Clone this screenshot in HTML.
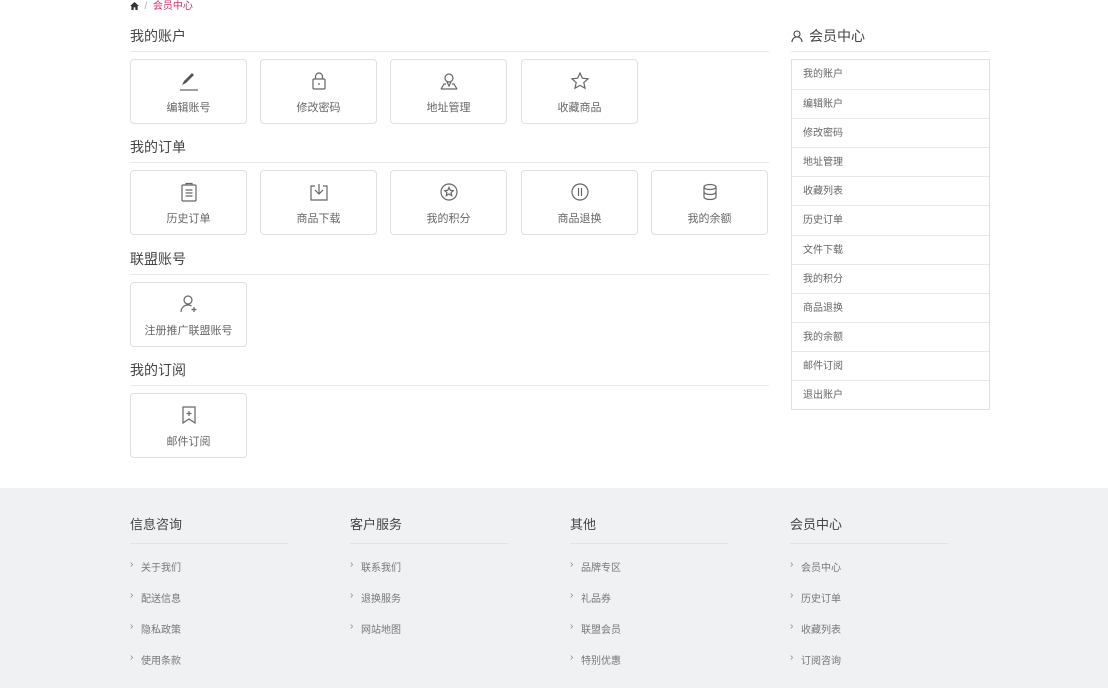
<!DOCTYPE html>
<html><head><meta charset="utf-8"><style>
*{margin:0;padding:0;box-sizing:border-box}
body{width:1108px;height:688px;background:#fff;font-family:"Liberation Sans","Noto Sans CJK SC",sans-serif;color:#333;position:relative;overflow:hidden}
.a{position:absolute}
.h{position:absolute;left:130px;width:639px;font-size:14px;color:#444;height:16px;line-height:16px}
.line{position:absolute;height:1px;background:#e8e8e8}
.card{position:absolute;width:117px;height:65px;border:1px solid #e0e0e0;border-radius:4px;text-align:center}
.card svg{position:absolute;left:48px;top:11px;width:20px;height:20px;fill:none;stroke:#666;stroke-width:1.2}
.card span{position:absolute;left:0;right:0;top:41px;font-size:11px;color:#666;line-height:14px}
.side{position:absolute;left:791px;top:59px;width:199px;border:1px solid #e0e0e0}
.side div{height:29.1px;line-height:29px;border-top:1px solid #e8e8e8;padding-left:11px;font-size:10px;color:#666}
.side div:first-child{border-top:0}
.foot{position:absolute;left:0;top:488px;width:1108px;height:200px;background:#f0f1f3}
.fc{position:absolute;top:27px;width:158px}
.fc h4{font-weight:normal;font-size:13px;color:#444;height:19px;line-height:19px}
.fc .l{height:1px;background:#e2e3e5;margin-top:9px}
.fc p{font-size:10px;color:#777;height:31px;line-height:14px;padding-left:11px;position:relative}
.fc p:first-of-type{margin-top:18px}
.fc p:before{content:"›";position:absolute;left:0;top:-4px;color:#888;font-size:10px}
</style></head><body>
<div class="a" style="left:130px;top:1px;font-size:10px;color:#aaa;line-height:12px"><svg width="9" height="8" viewBox="0 0 10 9" style="vertical-align:-1px"><path d="M5 0L0 4.5h1.5V9h2.5V6h2v3h2.5V4.5H10z" fill="#333"/></svg> &nbsp;/ &nbsp;<span style="color:#d0306a">会员中心</span></div>

<div class="h" style="top:28px">我的账户</div><div class="line" style="left:130px;top:51px;width:639px"></div>
<div class="card" style="left:130px;top:59px"><svg viewBox="0 0 20 20"><path d="M3 14l2-4 8-8 2 2-8 8-4 2z" fill="#555" stroke="none"/><path d="M1 19h18"/></svg><span>编辑账号</span></div>
<div class="card" style="left:260px;top:59px"><svg viewBox="0 0 20 20"><rect x="4" y="8" width="12" height="10" rx="1"/><path d="M6.5 8V5.5a3.5 3.5 0 0 1 7 0V8M10 12v2"/></svg><span>修改密码</span></div>
<div class="card" style="left:390px;top:59px"><svg viewBox="0 0 20 20"><circle cx="10" cy="7" r="4"/><path d="M8 11l2 4 2-4M2 18l3-5h2M18 18l-3-5h-2M2 18h16"/></svg><span>地址管理</span></div>
<div class="card" style="left:521px;top:59px"><svg viewBox="0 0 20 20"><path d="M10 2l2.4 5.2 5.6.6-4.2 3.8 1.2 5.6L10 14.4 5 17.2l1.2-5.6L2 7.8l5.6-.6z"/></svg><span>收藏商品</span></div>

<div class="h" style="top:139px">我的订单</div><div class="line" style="left:130px;top:162px;width:639px"></div>
<div class="card" style="left:130px;top:170px"><svg viewBox="0 0 20 20"><rect x="3" y="3" width="14" height="16" rx="1"/><path d="M7 3V1.5h6V3M6.5 8h7M6.5 11h7M6.5 14h7"/></svg><span>历史订单</span></div>
<div class="card" style="left:260px;top:170px"><svg viewBox="0 0 20 20"><path d="M6 4H2v14h16V4h-4M10 2v10M6 8l4 4 4-4"/></svg><span>商品下载</span></div>
<div class="card" style="left:390px;top:170px"><svg viewBox="0 0 20 20"><circle cx="10" cy="10" r="8"/><path d="M10 5.5l1.3 2.8 3 .3-2.2 2 .6 3L10 12l-2.7 1.6.6-3-2.2-2 3-.3z"/></svg><span>我的积分</span></div>
<div class="card" style="left:521px;top:170px"><svg viewBox="0 0 20 20"><circle cx="10" cy="10" r="8"/><path d="M8.5 6v8M11.5 6v8"/></svg><span>商品退换</span></div>
<div class="card" style="left:651px;top:170px"><svg viewBox="0 0 20 20"><ellipse cx="10" cy="5" rx="6" ry="2.5"/><path d="M4 5v10c0 1.4 2.7 2.5 6 2.5s6-1.1 6-2.5V5M4 10c0 1.4 2.7 2.5 6 2.5s6-1.1 6-2.5"/></svg><span>我的余额</span></div>

<div class="h" style="top:251px">联盟账号</div><div class="line" style="left:130px;top:274px;width:639px"></div>
<div class="card" style="left:130px;top:282px"><svg viewBox="0 0 20 20"><circle cx="9" cy="6" r="4"/><path d="M2 18c0-4 3-7 7-7 1.5 0 2.5.3 3.5 1M15 13v5M12.5 15.5h5"/></svg><span>注册推广联盟账号</span></div>

<div class="h" style="top:362px">我的订阅</div><div class="line" style="left:130px;top:385px;width:639px"></div>
<div class="card" style="left:130px;top:393px"><svg viewBox="0 0 20 20"><path d="M4 2h12v16l-6-4-6 4zM10 6v5M7.5 8.5h5"/></svg><span>邮件订阅</span></div>

<div class="a" style="left:791px;top:28px;font-size:14px;line-height:16px;color:#444"><svg width="12" height="12" viewBox="0 0 12 12" style="vertical-align:-1px;margin-right:6px"><circle cx="6" cy="4" r="3" fill="none" stroke="#444" stroke-width="1.1"/><path d="M1 12c0-3 2-5 5-5s5 2 5 5" fill="none" stroke="#444" stroke-width="1.1"/></svg>会员中心</div>
<div class="line" style="left:791px;top:51px;width:199px"></div>
<div class="side"><div>我的账户</div><div>编辑账户</div><div>修改密码</div><div>地址管理</div><div>收藏列表</div><div>历史订单</div><div>文件下载</div><div>我的积分</div><div>商品退换</div><div>我的余额</div><div>邮件订阅</div><div>退出账户</div></div>

<div class="foot">
<div class="fc" style="left:130px"><h4>信息咨询</h4><div class="l"></div><p>关于我们</p><p>配送信息</p><p>隐私政策</p><p>使用条款</p></div>
<div class="fc" style="left:350px"><h4>客户服务</h4><div class="l"></div><p>联系我们</p><p>退换服务</p><p>网站地图</p></div>
<div class="fc" style="left:570px"><h4>其他</h4><div class="l"></div><p>品牌专区</p><p>礼品券</p><p>联盟会员</p><p>特别优惠</p></div>
<div class="fc" style="left:790px"><h4>会员中心</h4><div class="l"></div><p>会员中心</p><p>历史订单</p><p>收藏列表</p><p>订阅咨询</p></div>
</div>
</body></html>
